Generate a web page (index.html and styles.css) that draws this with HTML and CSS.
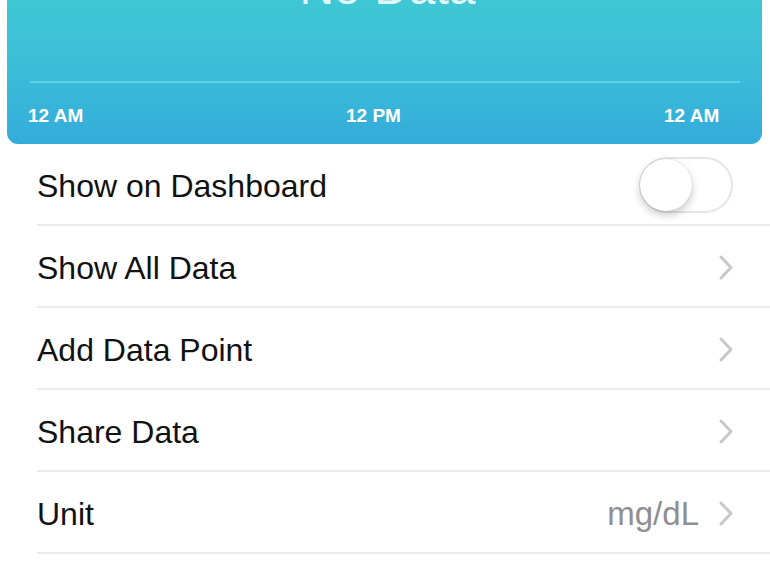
FILE: index.html
```html
<!DOCTYPE html>
<html>
<head>
<meta charset="utf-8">
<link rel="stylesheet" href="styles.css">
</head>
<body>
<div class="card">
  <div class="title">No Data</div>
  <div class="axis"></div>
  <div class="labels">
    <span>12 AM</span>
    <span>12 PM</span>
    <span>12 AM</span>
  </div>
</div>
<ul class="list">
  <li class="row">
    <span class="label">Show on Dashboard</span>
    <span class="toggle"><span class="knob"></span></span>
  </li>
  <li class="row">
    <span class="label">Show All Data</span>
    <svg class="chev" viewBox="0 0 14 25" width="14" height="25"><path d="M2 2 L12 12.5 L2 23" fill="none" stroke="#c7c7cc" stroke-width="3" stroke-linecap="round" stroke-linejoin="round"/></svg>
  </li>
  <li class="row">
    <span class="label">Add Data Point</span>
    <svg class="chev" viewBox="0 0 14 25" width="14" height="25"><path d="M2 2 L12 12.5 L2 23" fill="none" stroke="#c7c7cc" stroke-width="3" stroke-linecap="round" stroke-linejoin="round"/></svg>
  </li>
  <li class="row">
    <span class="label">Share Data</span>
    <svg class="chev" viewBox="0 0 14 25" width="14" height="25"><path d="M2 2 L12 12.5 L2 23" fill="none" stroke="#c7c7cc" stroke-width="3" stroke-linecap="round" stroke-linejoin="round"/></svg>
  </li>
  <li class="row">
    <span class="label">Unit</span>
    <span class="value">mg/dL</span>
    <svg class="chev" viewBox="0 0 14 25" width="14" height="25"><path d="M2 2 L12 12.5 L2 23" fill="none" stroke="#c7c7cc" stroke-width="3" stroke-linecap="round" stroke-linejoin="round"/></svg>
  </li>
</ul>
</body>
</html>
```
FILE: styles.css
```css
html, body {
  margin: 0;
  padding: 0;
  background: #ffffff;
  font-family: "Liberation Sans", Arial, sans-serif;
  overflow: hidden;
}

.card {
  margin: 0 8px 0 7px;
  height: 144px;
  box-sizing: border-box;
  background: linear-gradient(to bottom, #3ec7d4 0%, #3cbfd7 40%, #34acdb 100%);
  border-radius: 0 0 11px 11px;
  display: flex;
  flex-direction: column;
  color: #ffffff;
}

.title {
  margin-top: -36px;
  height: 48px;
  line-height: 48px;
  font-size: 48px;
  text-align: center;
  color: rgba(255, 255, 255, 0.85);
  padding-left: 6px;
}

.axis {
  margin: 69px 22px 0 23px;
  height: 2px;
  background: #5bd3e8;
}

.labels {
  display: grid;
  grid-template-columns: 318px 318px auto;
  padding-left: 21px;
  margin-top: 22px;
  font-size: 19px;
  font-weight: bold;
  line-height: 22px;
}

.list {
  list-style: none;
  margin: 0;
  padding: 0 0 0 37px;
}

.row {
  height: 80px;
  border-bottom: 2px solid #ebebeb;
  display: flex;
  align-items: center;
  padding-right: 37px;
  gap: 20px;
}

.label {
  flex: 1;
  font-size: 32px;
  color: #111111;
  padding-top: 4px;
}

.value {
  font-size: 33px;
  color: #8e8e93;
  padding-top: 4px;
}

.chev {
  display: block;
  margin-top: 2px;
}

.toggle {
  position: relative;
  width: 90px;
  height: 52px;
  border: 2px solid #e5e5e5;
  border-radius: 28px;
  background: #ffffff;
  margin-right: 0;
  margin-top: 2px;
}

.knob {
  position: absolute;
  left: -1px;
  top: 0;
  width: 52px;
  height: 52px;
  border-radius: 50%;
  background: #ffffff;
  box-shadow: 0 4px 8px rgba(0, 0, 0, 0.22), 0 0 1px rgba(0, 0, 0, 0.2);
}
```
